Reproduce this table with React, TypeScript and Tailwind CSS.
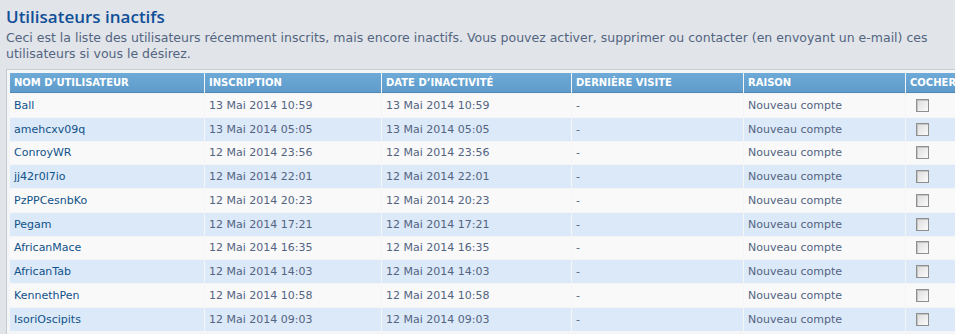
import React from "react"

const rows = [
  { name: "Ball", date: "13 Mai 2014 10:59" },
  { name: "amehcxv09q", date: "13 Mai 2014 05:05" },
  { name: "ConroyWR", date: "12 Mai 2014 23:56" },
  { name: "jj42r0l7io", date: "12 Mai 2014 22:01" },
  { name: "PzPPCesnbKo", date: "12 Mai 2014 20:23" },
  { name: "Pegam", date: "12 Mai 2014 17:21" },
  { name: "AfricanMace", date: "12 Mai 2014 16:35" },
  { name: "AfricanTab", date: "12 Mai 2014 14:03" },
  { name: "KennethPen", date: "12 Mai 2014 10:58" },
  { name: "IsoriOscipits", date: "12 Mai 2014 09:03" },
]

const headers = [
  { label: "Nom d’utilisateur", w: "w-[194px]" },
  { label: "Inscription", w: "w-[176px]" },
  { label: "Date d’inactivité", w: "w-[189px]" },
  { label: "Dernière visite", w: "w-[171px]" },
  { label: "Raison", w: "w-[161px]" },
  { label: "Cocher", w: "w-[80px]" },
]

// case à cocher façon Windows classique
const Box = () => (
  <span className="inline-block h-[13px] w-[13px] border border-[#8f8f8f] bg-gradient-to-br from-[#dcdcdc] to-[#fbfbfb] shadow-[inset_1px_1px_0_#c4c4c4]" />
)

const App = () => {
  return (
    <div
      className="h-[334px] w-[955px] overflow-hidden bg-[#e1e4e8] px-[6px] pt-[5px]"
      style={{ fontFamily: '"DejaVu Sans", Verdana, sans-serif' }}
    >
      <h2
        className="text-[17px] font-semibold leading-[24px] text-[#115098]"
        style={{ fontFamily: '"Open Sans", "DejaVu Sans", sans-serif' }}
      >
        Utilisateurs inactifs
      </h2>
      <p className="mt-[1px] w-[935px] text-[12.5px] leading-[16px] text-[#536482]">
        Ceci est la liste des utilisateurs récemment inscrits, mais encore inactifs. Vous pouvez activer, supprimer ou contacter (en envoyant un e-mail) ces utilisateurs si vous le désirez.
      </p>
      <div className="mt-[7px] w-[1000px] border border-[#c8cdd3] bg-[#f4f5f7] p-[2px]">
        <table className="border-separate border-spacing-[1px] text-left">
          <thead>
            <tr>
              {headers.map((h) => (
                <th
                  key={h.label}
                  className={`${h.w} h-[20px] border-b border-[#4f87b6] bg-gradient-to-b from-[#6eaad7] to-[#5f9ccb] px-[4px] text-[10px] font-bold uppercase text-white`}
                >
                  {h.label}
                </th>
              ))}
            </tr>
          </thead>
          <tbody>
            {rows.map((r, i) => (
              <tr
                key={r.name}
                className={`${i % 2 === 0 ? "bg-[#f9f9f9]" : "bg-[#dce9f8]"} h-[22.75px] text-[11px] leading-[13px] text-[#536482]`}
              >
                <td className="px-[4px] text-[#105289]">{r.name}</td>
                <td className="px-[4px]">{r.date}</td>
                <td className="px-[4px]">{r.date}</td>
                <td className="px-[4px]">-</td>
                <td className="px-[4px]">Nouveau compte</td>
                <td className="px-[10px]">
                  <div className="flex items-center">
                    <Box />
                  </div>
                </td>
              </tr>
            ))}
          </tbody>
        </table>
      </div>
    </div>
  )
}

export default App
